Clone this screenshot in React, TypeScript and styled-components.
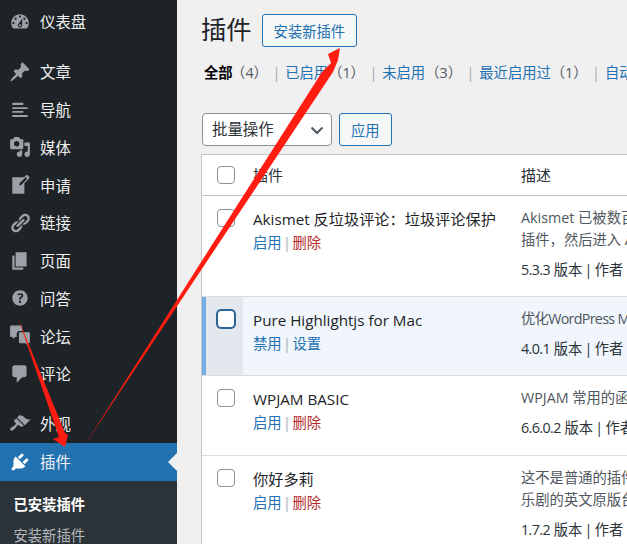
import React from 'react';
import styled, { createGlobalStyle } from 'styled-components';

const icons: Record<string, string> = {
  dashboard: 'M3.76 16h12.48c1.1-1.37 1.76-3.11 1.76-5 0-4.42-3.58-8-8-8s-8 3.58-8 8c0 1.89.66 3.63 1.76 5zM10 4c.55 0 1 .45 1 1s-.45 1-1 1-1-.45-1-1 .45-1 1-1zM6 6c.55 0 1 .45 1 1s-.45 1-1 1-1-.45-1-1 .45-1 1-1zm8 0c.55 0 1 .45 1 1s-.45 1-1 1-1-.45-1-1 .45-1 1-1zm-5.37 5.55L12 7v6c0 1.1-.9 2-2 2s-2-.9-2-2c0-.57.24-1.08.63-1.45zM4 10c.55 0 1 .45 1 1s-.45 1-1 1-1-.45-1-1 .45-1 1-1zm12 0c.55 0 1 .45 1 1s-.45 1-1 1-1-.45-1-1 .45-1 1-1zm-5 3c0-.55-.45-1-1-1s-1 .45-1 1 .45 1 1 1 1-.45 1-1z',
  post: 'M10.44 3.02l1.82-1.82 6.36 6.35-1.83 1.82c-1.05-.68-2.48-.57-3.41.36l-.75.75c-.92.93-1.04 2.35-.35 3.41l-1.83 1.82-2.41-2.41-2.8 2.79c-.42.42-3.38 2.71-3.8 2.29s1.86-3.39 2.28-3.81l2.79-2.79L4.1 9.36l1.83-1.82c1.05.69 2.48.57 3.4-.36l.75-.75c.93-.92 1.05-2.35.36-3.41z',
  menu: 'M3 3.5h10v2H3zM3 7.5h14v1.6H3zM3 11h10v1.6H3zM3 14.5h14v1.8H3z',
  media: 'M13 11V4c0-.55-.45-1-1-1h-1.67L9 1H5L3.67 3H2c-.55 0-1 .45-1 1v7c0 .55.45 1 1 1h10c.55 0 1-.45 1-1zM7 4.5c1.38 0 2.5 1.12 2.5 2.5S8.38 9.5 7 9.5 4.5 8.38 4.5 7 5.62 4.5 7 4.5zM14 6h5v10.5c0 1.38-1.12 2.5-2.5 2.5S14 17.88 14 16.5s1.12-2.5 2.5-2.5c.17 0 .34.02.5.05V9h-3V6zm-4 8.05V13h2v3.5c0 1.38-1.12 2.5-2.5 2.5S7 17.88 7 16.5 8.12 14 9.5 14c.17 0 .34.02.5.05z',
  write: 'M16.89 1.2l1.41 1.41c.39.39.39 1.02 0 1.41L14 8.33V18H3V3h10.67l1.8-1.8c.4-.39 1.03-.4 1.42 0zm-5.66 8.48l5.37-5.36-1.42-1.42-5.36 5.37-.71 2.12z',
  links: 'M17.74 2.76c1.68 1.69 1.68 4.41 0 6.1l-1.53 1.52c-1.12 1.12-2.7 1.47-4.14 1.09l2.62-2.61.76-.77.76-.76c.84-.84.84-2.2 0-3.04-.84-.85-2.2-.85-3.04 0l-.77.76-3.38 3.38c-.37-1.44-.02-3.02 1.1-4.14l1.52-1.53c1.69-1.68 4.42-1.68 6.1 0zM8.59 13.43l5.34-5.34c.42-.42.42-1.1 0-1.52-.44-.43-1.13-.39-1.53 0l-5.33 5.34c-.42.42-.42 1.1 0 1.52.44.43 1.13.39 1.52 0zm-.76 2.29l4.14-4.15c.38 1.44.03 3.02-1.09 4.14l-1.52 1.53c-1.69 1.68-4.41 1.68-6.1 0-1.68-1.68-1.68-4.42 0-6.1l1.53-1.52c1.12-1.12 2.7-1.47 4.14-1.1l-4.14 4.15c-.85.84-.85 2.2 0 3.05.84.84 2.2.84 3.04 0z',
  page: 'M6 15V2h10v13H6zm-1 1h8v2H3V5h2v11z',
  help: 'M17 10c0-3.87-3.14-7-7-7-3.87 0-7 3.13-7 7s3.13 7 7 7c3.86 0 7-3.13 7-7zm-6.3 1.48H9.14v-.43c0-.38.08-.7.24-.98s.46-.57.88-.89c.41-.29.68-.53.81-.71.14-.18.2-.39.2-.62 0-.25-.09-.44-.28-.58-.19-.13-.45-.19-.79-.19-.58 0-1.25.19-2 .57l-.64-1.28c.87-.49 1.8-.74 2.77-.74.81 0 1.45.2 1.92.58.48.39.71.91.71 1.55 0 .43-.09.8-.29 1.11-.19.32-.57.67-1.11 1.06-.38.28-.61.49-.71.63-.1.15-.15.34-.15.57v.35zm-1.47 2.74c-.18-.17-.27-.42-.27-.73 0-.33.08-.58.26-.75s.43-.25.77-.25c.32 0 .57.09.75.26s.27.42.27.74c0 .3-.09.55-.27.72-.18.18-.43.27-.75.27-.33 0-.58-.09-.76-.26z',
  forum: 'M2 .5h9c.6 0 1 .4 1 1v4H9.500C8.100 5.500 7 6.600 7 8v3H5.500L3.500 13v-2H2c-.6 0-1-.4-1-1V1.500c0-.6.4-1 1-1zM10 6.500h8c.6 0 1 .4 1 1v8c0 .6-.4 1-1 1h-.5V19L15 16.500h-5c-.6 0-1-.4-1-1v-8c0-.6.4-1 1-1z',
  comment: 'M5 2h9c1.1 0 2 .9 2 2v7c0 1.1-.9 2-2 2h-2l-5 5v-5H5c-1.1 0-2-.9-2-2V4c0-1.1.9-2 2-2z',
  brush: 'M14.48 11.06L7.41 3.99l1.5-1.5c.5-.56 2.3-.47 3.51.32 1.21.8 1.43 1.28 2.91 2.1 1.18.64 2.45 1.26 4.45.85zm-.71.71L6.7 4.7 4.93 6.47c-.39.39-.39 1.02 0 1.41l1.06 1.06c.39.39.39 1.03 0 1.42-.6.6-1.43 1.11-2.21 1.69-.35.26-.7.53-1.01.84C1.43 13.23.4 14.75 1.4 15.74s2.53-.03 3.81-1.37c.3-.31.58-.66.84-1.01.58-.79 1.09-1.61 1.69-2.21.39-.39 1.02-.39 1.41 0l1.06 1.06c.39.39 1.02.39 1.41 0z',
  plugin: 'M13.11 4.36L9.87 7.6 8 5.73l3.24-3.24c.35-.34 1.05-.2 1.56.32.52.51.66 1.21.31 1.55zm-8 1.77l.91-1.12 9.01 9.01-1.19.84c-.71.71-2.63 1.16-3.82 1.16H6.14L4.9 17.26c-.59.59-1.54.59-2.12 0-.59-.58-.59-1.53 0-2.12l1.24-1.24v-3.88c0-1.13.4-3.19 1.09-3.89zm7.26 3.97l3.24-3.24c.34-.35 1.04-.21 1.55.31.52.51.66 1.21.31 1.55l-3.24 3.25z',
};

const menuItems = [
  { icon: 'dashboard', label: '仪表盘' },
  { icon: 'post', label: '文章', spaced: true },
  { icon: 'menu', label: '导航' },
  { icon: 'media', label: '媒体' },
  { icon: 'write', label: '申请' },
  { icon: 'links', label: '链接' },
  { icon: 'page', label: '页面' },
  { icon: 'help', label: '问答' },
  { icon: 'forum', label: '论坛' },
  { icon: 'comment', label: '评论' },
  { icon: 'brush', label: '外观', spaced: true },
  { icon: 'plugin', label: '插件', active: true },
];

const filters = [
  { label: '已启用', count: 1 },
  { label: '未启用', count: 3 },
  { label: '最近启用过', count: 1 },
  { label: '自动更新已禁用', count: 4 },
];

const plugins = [
  {
    name: 'Akismet 反垃圾评论：垃圾评论保护',
    desc: ['Akismet 已被数百万用户使用', '插件，然后进入 Akismet 设置'],
    version: '5.3.3',
    actions: ['启用', '删除'],
    height: 101,
  },
  {
    name: 'Pure Highlightjs for Mac',
    desc: ['优化WordPress Mac 代码高亮'],
    version: '4.0.1',
    actions: ['禁用', '设置'],
    height: 79,
    active: true,
  },
  {
    name: 'WPJAM BASIC',
    desc: ['WPJAM 常用的函数和接口，屏蔽'],
    version: '6.6.0.2',
    actions: ['启用', '删除'],
    height: 80,
  },
  {
    name: '你好多莉',
    desc: ['这不是普通的插件，它象征着', '乐剧的英文原版台词，启用后'],
    version: '1.7.2',
    actions: ['启用', '删除'],
    height: 90,
  },
];

function App() {
  return (
    <Page>
      <GlobalStyle />
      <Sidebar>
        <Menu>
          {menuItems.map((item) => (
            <MenuItem key={item.label} $spaced={item.spaced} $active={item.active}>
              <MenuIcon viewBox="0 0 20 20" $active={item.active}>
                <path fillRule="evenodd" d={icons[item.icon]} />
              </MenuIcon>
              {item.label}
            </MenuItem>
          ))}
        </Menu>
        <SubMenu>
          <SubItem $current>已安装插件</SubItem>
          <SubItem>安装新插件</SubItem>
        </SubMenu>
      </Sidebar>

      <Main>
        <Header>
          <Title>插件</Title>
          <OutlineButton>安装新插件</OutlineButton>
        </Header>

        <Filters>
          <CurrentFilter>全部</CurrentFilter>
          <Count>（4）</Count>
          {filters.map((f) => (
            <React.Fragment key={f.label}>
              <Divider>|</Divider>
              <Link>{f.label}</Link>
              <Count>（{f.count}）</Count>
            </React.Fragment>
          ))}
        </Filters>

        <Toolbar>
          <BulkSelect>
            批量操作
            <svg width="16" height="16" viewBox="0 0 16 16" fill="none" stroke="#50575e" strokeWidth="2">
              <path d="M2.500 5.500 8 11l5.500-5.500" />
            </svg>
          </BulkSelect>
          <OutlineButton>应用</OutlineButton>
        </Toolbar>

        <Table>
          <HeadRow>
            <CheckCell $top={11}>
              <Checkbox />
            </CheckCell>
            <HeadLabel>插件</HeadLabel>
            <HeadLabel>描述</HeadLabel>
          </HeadRow>
          {plugins.map((p) => (
            <PluginRow key={p.name} $height={p.height} $active={p.active}>
              <CheckCell $top={13} $active={p.active}>
                <Checkbox $focus={p.active} />
              </CheckCell>
              <NameCell>
                <PluginName $active={p.active}>{p.name}</PluginName>
                <Actions>
                  <Link>{p.actions[0]}</Link>
                  <ActionBar>|</ActionBar>
                  {p.active ? <Link>{p.actions[1]}</Link> : <DeleteLink>{p.actions[1]}</DeleteLink>}
                </Actions>
              </NameCell>
              <DescCell>
                {p.desc.map((line) => (
                  <DescLine key={line} $tight={p.active}>{line}</DescLine>
                ))}
                <Version>
                  <VersionNumber>{p.version}</VersionNumber> 版本 <VersionBar>|</VersionBar> 作者 :
                </Version>
              </DescCell>
            </PluginRow>
          ))}
        </Table>
      </Main>

      <Arrows viewBox="0 0 627 544">
        <polygon points="84,446 333,72 338,60 340,48 328,54 331,63 322,72" />
        <polygon points="18,318 59,437 53,439 65,447 68,435 65,433" />
      </Arrows>
    </Page>
  );
}

const GlobalStyle = createGlobalStyle`
  html, body {
    margin: 0;
    height: 100%;
    overflow: hidden;
    background: #f0f0f1;
  }
  * {
    box-sizing: border-box;
  }
`;

const Page = styled.div`
  position: relative;
  display: flex;
  width: 627px;
  height: 544px;
  overflow: hidden;
  font-family: "Open Sans", "Noto Sans CJK SC", sans-serif;
  font-size: 14.3px;
  color: #2c3338;
`;

const Sidebar = styled.aside`
  display: flex;
  flex-direction: column;
  flex: 0 0 177px;
  background: #1d2327;
`;

const Menu = styled.nav`
  padding-top: 3px;
`;

const MenuItem = styled.div<{ $spaced?: boolean; $active?: boolean }>`
  position: relative;
  display: flex;
  align-items: center;
  gap: 9px;
  height: 37.75px;
  padding-left: 9px;
  margin-top: ${(p) => (p.$spaced ? '12.25px' : '0')};
  font-size: 15.4px;
  color: #f0f0f1;
  background: ${(p) => (p.$active ? '#2271b1' : 'transparent')};

  ${(p) =>
    p.$active &&
    `&::after {
      content: '';
      position: absolute;
      right: 0;
      top: 50%;
      margin-top: -9px;
      border: 9px solid transparent;
      border-left-width: 0;
      border-right-color: #f0f0f1;
    }`}
`;

const MenuIcon = styled.svg<{ $active?: boolean }>`
  flex: none;
  width: 22px;
  height: 22px;
  fill: ${(p) => (p.$active ? '#ffffff' : '#9ca1a7')};
`;

const SubMenu = styled.div`
  flex: 1;
  padding-top: 8px;
  background: #2c3338;
`;

const SubItem = styled.div<{ $current?: boolean }>`
  padding-left: 13.5px;
  line-height: 31px;
  font-weight: ${(p) => (p.$current ? 700 : 400)};
  color: ${(p) => (p.$current ? '#ffffff' : '#b4b9be')};
`;

const Main = styled.main`
  flex: 1;
  min-width: 0;
  padding: 14px 0 0 24px;
  overflow: hidden;
`;

const Header = styled.header`
  display: flex;
  align-items: center;
  gap: 10px;
`;

const Title = styled.h1`
  margin: -2px 0 0;
  font-size: 25.3px;
  font-weight: 400;
  line-height: 33px;
  color: #1d2327;
`;

const OutlineButton = styled.button`
  height: 33px;
  padding: 0 11px;
  border: 1px solid #2271b1;
  border-radius: 3px;
  background: #f6f7f7;
  color: #2271b1;
  font: inherit;
`;

const Filters = styled.div`
  display: flex;
  margin: 15px 0 0 3px;
  line-height: 22px;
  white-space: nowrap;
`;

const CurrentFilter = styled.span`
  margin-right: -1.5px;
  font-weight: 700;
  color: #000000;
`;

const Count = styled.span`
  color: #50575e;
`;

const Divider = styled.span`
  margin: 0 5px 0 4.5px;
  color: #a7aaad;
`;

const Link = styled.span`
  color: #2271b1;
`;

const DeleteLink = styled.span`
  color: #b32d2e;
`;

const Toolbar = styled.div`
  display: flex;
  gap: 7px;
  margin: 29px 0 8px 1px;
`;

const BulkSelect = styled.div`
  display: flex;
  align-items: center;
  justify-content: space-between;
  width: 130px;
  height: 33px;
  padding: 0 6px 2px 9px;
  border: 1px solid #8c8f94;
  border-radius: 4px;
  background: #ffffff;
  font-size: 15.4px;

  svg {
    margin-top: 2px;
  }
`;

const Table = styled.div`
  width: 720px;
  border: 1px solid #c3c4c7;
  border-bottom: 0;
  background: #ffffff;
`;

const HeadRow = styled.div`
  display: grid;
  grid-template-columns: 41px 268px 1fr;
  height: 41px;
  border-bottom: 1px solid #c3c4c7;
`;

const HeadLabel = styled.div`
  padding-left: 10px;
  line-height: 40px;
  font-size: 15px;
`;

const PluginRow = styled.div<{ $height: number; $active?: boolean }>`
  display: grid;
  grid-template-columns: 41px 268px 1fr;
  height: ${(p) => p.$height}px;
  border-bottom: 1px solid #dcdcde;
  background: ${(p) => (p.$active ? '#f0f6fc' : '#ffffff')};
`;

const CheckCell = styled.div<{ $top: number; $active?: boolean }>`
  padding: ${(p) => p.$top}px 0 0 15px;
  background: ${(p) => (p.$active ? '#e3e8ef' : 'transparent')};
  box-shadow: ${(p) => (p.$active ? 'inset 4px 0 0 #72aee6' : 'none')};
`;

const Checkbox = styled.div<{ $focus?: boolean }>`
  width: 18px;
  height: 18px;
  border: 1px solid ${(p) => (p.$focus ? '#2c6496' : '#8c8f94')};
  border-radius: 4px;
  background: #ffffff;
  box-shadow: ${(p) => (p.$focus ? '0 0 0 1px #2c6496' : 'none')};
`;

const NameCell = styled.div`
  padding: 11px 0 0 10px;
`;

const PluginName = styled.div<{ $active?: boolean }>`
  line-height: 24px;
  font-size: 15.2px;
  white-space: nowrap;
  color: #1d2327;
  font-weight: ${(p) => (p.$active ? 500 : 400)};
`;

const Actions = styled.div`
  display: flex;
  line-height: 23px;
`;

const ActionBar = styled.span`
  margin: 0 1.5px;
  color: #a7aaad;
`;

const DescCell = styled.div`
  padding: 11px 0 0 10px;
  white-space: nowrap;
`;

const DescLine = styled.div<{ $tight?: boolean }>`
  line-height: 22px;
  color: #50575e;
  letter-spacing: ${(p) => (p.$tight ? '-0.7px' : '0')};
`;

const Version = styled.div`
  margin-top: 8px;
  line-height: 22px;
  color: #2c3338;
`;

const VersionNumber = styled.span`
  letter-spacing: -0.6px;
`;

const VersionBar = styled.span`
  margin: 0 -1.5px;
`;

const Arrows = styled.svg`
  position: absolute;
  inset: 0;
  width: 627px;
  height: 544px;
  fill: #ff1c10;
  pointer-events: none;
`;

export default App;
